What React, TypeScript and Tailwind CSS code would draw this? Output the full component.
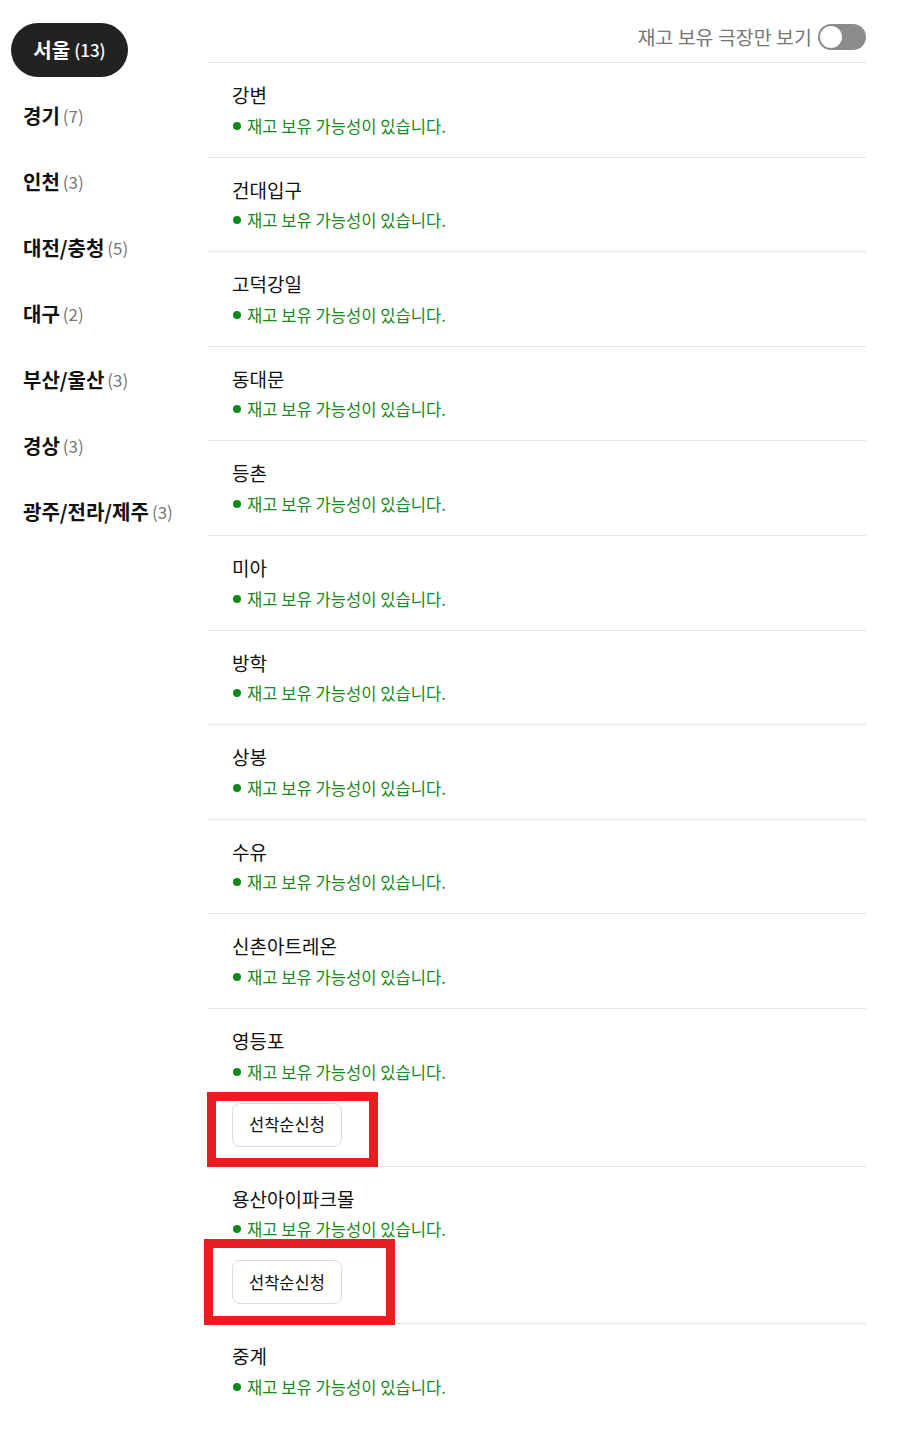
import { useState } from "react";

const regions = [
  { name: "서울", count: 13 },
  { name: "경기", count: 7 },
  { name: "인천", count: 3 },
  { name: "대전/충청", count: 5 },
  { name: "대구", count: 2 },
  { name: "부산/울산", count: 3 },
  { name: "경상", count: 3 },
  { name: "광주/전라/제주", count: 3 },
];

const theaters = [
  { name: "강변" },
  { name: "건대입구" },
  { name: "고덕강일" },
  { name: "동대문" },
  { name: "등촌" },
  { name: "미아" },
  { name: "방학" },
  { name: "상봉" },
  { name: "수유" },
  { name: "신촌아트레온" },
  { name: "영등포", apply: true, mark: "w-[171px] h-[75px] -left-[25px] -top-[11px]" },
  { name: "용산아이파크몰", apply: true, mark: "w-[191px] h-[86px] -left-[28px] -top-[21px]" },
  { name: "중계" },
];

const App = () => {
  const [active, setActive] = useState(0);
  const [onlyStock, setOnlyStock] = useState(false);

  return (
    <div
      className="min-h-screen bg-white text-[#111] flex pt-[23px]"
      style={{ fontFamily: '"Noto Sans CJK KR", "Noto Sans", sans-serif' }}
    >
      {/* region tabs */}
      <div className="w-[208px] shrink-0 flex flex-col gap-[12px] pl-[11px]">
        {regions.map((r, i) =>
          i === active ? (
            <button
              key={r.name}
              onClick={() => setActive(i)}
              className="w-[117px] h-[54px] rounded-full bg-[#222] text-white flex items-center justify-center gap-[4px]"
            >
              <span className="text-[20px] font-bold">{r.name}</span>
              <span className="text-[17px] font-medium">({r.count})</span>
            </button>
          ) : (
            <button
              key={r.name}
              onClick={() => setActive(i)}
              className="h-[54px] pl-[12px] flex items-center gap-[3px] text-left"
            >
              <span className="text-[20px] font-bold">{r.name}</span>
              <span className="text-[17px] text-[#777]">({r.count})</span>
            </button>
          )
        )}
      </div>

      {/* theater list */}
      <div className="w-[658px] shrink-0 -mt-[23px]">
        <div className="h-[62px] flex items-center justify-end gap-[6px] pt-[12px]">
          <span className="text-[19.5px] text-[#777]">재고 보유 극장만 보기</span>
          <button
            onClick={() => setOnlyStock(!onlyStock)}
            className={`w-[48px] h-[26px] rounded-full p-[2px] flex ${onlyStock ? "bg-[#222] justify-end" : "bg-[#8c8c8c] justify-start"}`}
          >
            <span className="w-[22px] h-[22px] rounded-full bg-white" />
          </button>
        </div>
        {theaters.map((t) => (
          <div key={t.name} className="border-t border-[#e5e5e5] pl-[24px] pt-[18px] pb-[19px]">
            <div className="text-[19px] leading-[27.6px]">{t.name}</div>
            <div className="mt-[5px] flex items-center gap-[6px] text-[16.6px] leading-[24px] text-[#16891f]">
              <span className="w-[8px] h-[8px] rounded-full bg-[#0f8a1a] ml-[1px]" />
              재고 보유 가능성이 있습니다.
            </div>
            {t.apply && (
              <div className="relative mt-[19px] w-fit">
                <button className="h-[44px] px-[16px] rounded-[8px] border border-[#dcdcdc] bg-white text-[16.5px]">
                  선착순신청
                </button>
                <div className={`absolute border-[9px] border-[#e81e22] pointer-events-none ${t.mark}`} />
              </div>
            )}
          </div>
        ))}
      </div>
    </div>
  );
};

export default App;
